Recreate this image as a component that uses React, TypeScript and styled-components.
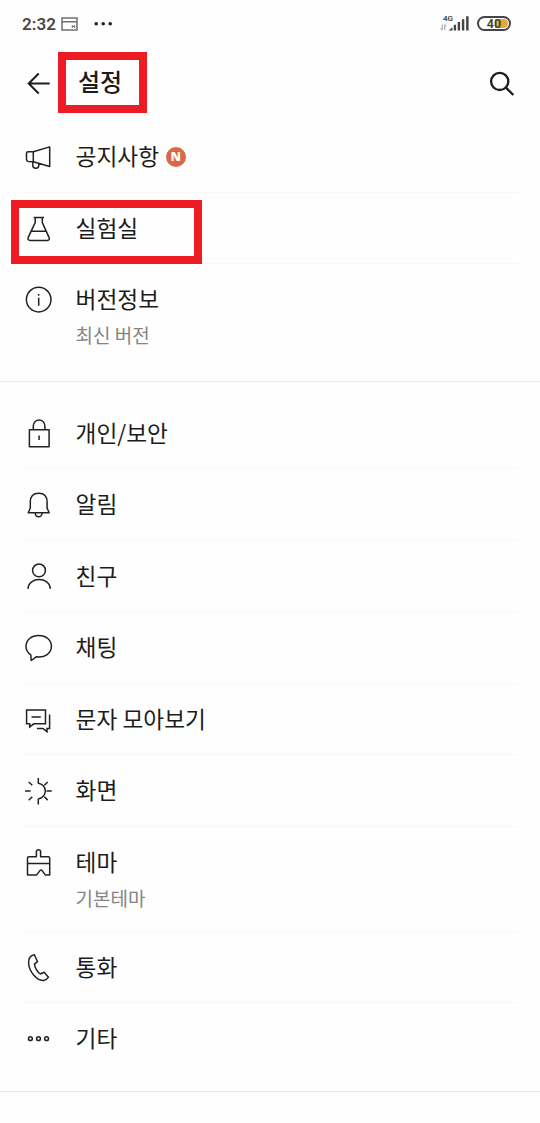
import React from 'react';
import styled, { createGlobalStyle } from 'styled-components';

const GlobalStyle = createGlobalStyle`
  * { box-sizing: border-box; }
  body {
    margin: 0;
    background: #fefefe;
    color: #1c1c1c;
    font-family: "Noto Sans CJK KR", "Noto Sans", sans-serif;
  }
`;

const Screen = styled.div`
  width: 540px;
  height: 1123px;
  overflow: hidden;
  background: #fefefe;
`;

const StatusBar = styled.header`
  height: 46px;
  padding: 1px 29px 0 22px;
  display: flex;
  align-items: center;
  justify-content: space-between;
  font-family: Roboto, sans-serif;
`;

const StatusGroup = styled.div<{ $gap: number }>`
  display: flex;
  align-items: center;
  gap: ${(p) => p.$gap}px;
`;

const Clock = styled.span`
  width: 34px;
  font-size: 17px;
  font-weight: 600;
  line-height: 20px;
  letter-spacing: 0.1px;
  color: #484848;
  white-space: nowrap;
`;

const Signal = styled.div`
  display: flex;
  align-items: flex-end;
  height: 17px;
`;

const Network = styled.div`
  display: flex;
  flex-direction: column;
  width: 13px;
  height: 17px;
`;

const NetworkLabel = styled.span`
  padding-left: 3px;
  font-size: 8px;
  line-height: 8px;
  font-weight: 600;
  color: #444;
`;

const Battery = styled.div`
  width: 34px;
  height: 15px;
  display: flex;
  align-items: center;
  justify-content: center;
  border: 2px solid #444;
  border-radius: 8px;
  font-size: 12.5px;
  line-height: 11px;
  font-weight: 600;
  color: #3c3c3c;
`;

const BatteryLevel = styled.span`
  width: 28px;
  height: 9px;
  display: flex;
  align-items: center;
  justify-content: center;
  border-radius: 0 5px 5px 0;
  background: linear-gradient(to right, transparent 15px, #eba63a 15px);
`;

const TitleBar = styled.div`
  height: 75px;
  padding: 0 24px 0 26px;
  display: flex;
  align-items: center;
`;

const TitleText = styled.h1`
  position: relative;
  flex: 1;
  margin: 0 0 6px 26px;
  font-size: 24px;
  line-height: 36px;
  font-weight: 500;
`;

const Group = styled.section<{ $top: number; $bottom: number }>`
  padding: ${(p) => p.$top}px 0 ${(p) => p.$bottom}px;
  border-bottom: 1px solid #e9e9e9;
`;

const Row = styled.div<{ $tall?: boolean; $last?: boolean }>`
  position: relative;
  height: ${(p) => (p.$tall ? 105 : 71.5)}px;
  margin: 0 22px 0 24px;
  display: flex;
  align-items: flex-start;
  border-bottom: 1px solid ${(p) => (p.$last ? 'transparent' : '#f8f8f8')};
`;

const IconCell = styled.div`
  width: 51.6px;
  height: 71.5px;
  display: flex;
  align-items: center;
`;

const Texts = styled.div`
  display: flex;
  flex-direction: column;
  padding-top: 18px;
`;

const Label = styled.div`
  display: flex;
  align-items: center;
  gap: 6.6px;
  font-size: 22.7px;
  line-height: 34px;
  white-space: nowrap;
`;

const Detail = styled.div`
  padding-top: 5px;
  font-size: 19px;
  line-height: 28px;
  color: #858585;
`;

const NewBadge = styled.span`
  width: 20px;
  height: 20px;
  margin-top: 2px;
  border-radius: 50%;
  background: #dc6747;
  color: #fff;
  font: 800 12.5px/20px "Open Sans", sans-serif;
  text-align: center;
`;

const Highlight = styled.div<{ $x: number; $y: number; $w: number; $h: number }>`
  position: absolute;
  left: ${(p) => p.$x}px;
  top: ${(p) => p.$y}px;
  width: ${(p) => p.$w}px;
  height: ${(p) => p.$h}px;
  border: 8px solid #ed1c24;
`;

const LineIcon = styled.svg`
  flex: none;
  fill: none;
  stroke: #222;
  stroke-width: 1.5;
  stroke-linejoin: round;
`;

const icons: Record<string, React.ReactNode> = {
  notice: (
    <path d="M9.3 9.8 25.7 4.9V24.5L9.3 19.7M9.3 9.8V19.7M9.3 9.8H4.2Q2.5 9.8 2.5 11.5V17.5Q2.5 19.2 4.2 19.5L9.3 19.7M8.8 19.7V23.2A3 3 0 0 0 14.8 23.2V21.4" />
  ),
  lab: (
    <path d="M9.7 4.5H20M11.2 4.5V9.6L4.2 24.4Q3.2 27.4 6.3 27.4H23.2Q26.2 27.2 25 24.4L18.3 9.6V4.5M7.4 18.2H22" />
  ),
  info: (
    <>
      <circle cx="14.7" cy="14.6" r="12.3" />
      <path d="M14.7 12.8V20.8M14.7 8.9V10.7" />
    </>
  ),
  lock: (
    <path d="M5.4 10.7H25.1V27.7H5.4ZM9.3 10.7V6.8A5.8 5.8 0 0 1 20.9 6.8V10.7M15.1 16.4V21" />
  ),
  bell: (
    <path d="M6.3 12C6.3 6 9.5 3.2 14.7 3.2S23.1 6 23.1 12V18.2L25.2 22.7H4.2L6.3 18.2ZM11.3 22.7C11.3 28.1 18.1 28.1 18.1 22.7" />
  ),
  friend: (
    <>
      <circle cx="15" cy="8.4" r="6.4" />
      <path d="M4 26.9C4.6 14.4 25.7 14.4 26.3 26.9" />
    </>
  ),
  chat: (
    <path d="M14.7 2.4C7.3 2.4 2 7 2 13.3C2 17 3.6 19.8 6.8 21.9L7.2 27.5 12.2 23.8C21.2 24.9 27.4 20.2 27.4 13.3C27.4 7 22 2.4 14.7 2.4Z" />
  ),
  messages: (
    <path strokeLinejoin="miter" d="M2.6 4.9H21.5V18.8H9.7L5.7 22V18.8H2.6ZM7.5 11.9H16.8M25.6 9.5V23.5H23V26.7L18.9 23.4H12.9" />
  ),
  display: (
    <path d="M14.3 2V7.2A7.9 7.9 0 0 1 14.3 22.9V28.6M22.5 15H27.7M1 15H6.6M20.4 9.2 23.7 6M20.4 20.8 23.7 24.1M4.7 6 8.3 9.3M4.7 24.3 8.3 20.7" />
  ),
  theme: (
    <path d="M3.5 26.9V10.3Q3.5 8.8 5 8.8H12.4V3.8A2.1 2.1 0 0 1 16.6 3.8V8.8H24.2Q25.7 8.8 25.7 10.3V26.9H21.3L18.1 22.6Q17 21.4 15.9 22.6L12.7 26.9ZM3.5 15.5H25.7" />
  ),
  phone: (
    <path d="M10.4 1.8C6.7 2.5 4.5 5.2 4.6 9.7C4.8 18 12.8 28.4 19.8 27.4C22.3 27 23.4 25.8 24.5 24.2L20.1 19.2 16.3 21C13.4 18.8 11.1 15.1 10.4 11.1L13.5 8.7Z" />
  ),
  more: (
    <>
      <circle cx="6.4" cy="14.7" r="1.9" />
      <circle cx="14.5" cy="14.7" r="1.9" />
      <circle cx="22.6" cy="14.7" r="1.9" />
    </>
  ),
};

interface Item {
  icon: string;
  label: string;
  detail?: string;
  isNew?: boolean;
  marked?: boolean;
}

const aboutItems: Item[] = [
  { icon: 'notice', label: '공지사항', isNew: true },
  { icon: 'lab', label: '실험실', marked: true },
  { icon: 'info', label: '버전정보', detail: '최신 버전' },
];

const settingItems: Item[] = [
  { icon: 'lock', label: '개인/보안' },
  { icon: 'bell', label: '알림' },
  { icon: 'friend', label: '친구' },
  { icon: 'chat', label: '채팅' },
  { icon: 'messages', label: '문자 모아보기' },
  { icon: 'display', label: '화면' },
  { icon: 'theme', label: '테마', detail: '기본테마' },
  { icon: 'phone', label: '통화' },
  { icon: 'more', label: '기타' },
];

function SettingRows({ items }: { items: Item[] }) {
  return (
    <>
      {items.map((item, i) => (
        <Row key={item.label} $tall={!!item.detail} $last={i === items.length - 1}>
          <IconCell>
            <LineIcon width="30" height="30" viewBox="0 0 30 30">
              {icons[item.icon]}
            </LineIcon>
          </IconCell>
          <Texts>
            <Label>
              {item.label}
              {item.isNew && <NewBadge>N</NewBadge>}
            </Label>
            {item.detail && <Detail>{item.detail}</Detail>}
          </Texts>
          {item.marked && <Highlight $x={-13} $y={7.5} $w={191} $h={64} />}
        </Row>
      ))}
    </>
  );
}

export default function App() {
  return (
    <Screen>
      <GlobalStyle />
      <StatusBar>
        <StatusGroup $gap={5}>
          <Clock>2:32</Clock>
          <svg width="17" height="14" viewBox="0 0 17 14" fill="none" stroke="#707070" strokeWidth="1.5">
            <path d="M1 1H16V13H1ZM1 4.7H16" />
            <path d="M11.3 8V11M13.7 8V11M11.3 9.5H13.7" strokeWidth="1" />
          </svg>
          <svg width="32" height="6" viewBox="0 0 32 6" fill="#222">
            <circle cx="13.2" cy="2.7" r="1.8" />
            <circle cx="20.2" cy="2.7" r="1.8" />
            <circle cx="27.2" cy="2.7" r="1.8" />
          </svg>
        </StatusGroup>
        <StatusGroup $gap={7}>
          <Signal>
            <Network>
              <NetworkLabel>4G</NetworkLabel>
              <svg width="8" height="8" viewBox="0 0 8 8" fill="none" stroke="#909090" strokeWidth="0.9">
                <path d="M2.2 1.5V7M0.6 5.2 2.2 7M4.8 7V1.5L6.5 3.2" />
              </svg>
            </Network>
            <svg width="17" height="17" viewBox="0 0 17 17" fill="#444" overflow="visible">
              <path d="M-4.5 15.5 -0.5 12.3V15.5ZM0.8 9.8H3.1V15.5H0.8ZM4.7 7H7.1V15.5H4.7ZM8.9 4.3H11.3V15.5H8.9ZM13.1 1.2H15.6V15.5H13.1Z" />
            </svg>
          </Signal>
          <Battery>
            <BatteryLevel>40</BatteryLevel>
          </Battery>
        </StatusGroup>
      </StatusBar>
      <TitleBar>
        <svg width="26" height="26" viewBox="0 0 26 26" fill="none" stroke="#1c1c1c" strokeWidth="2">
          <path d="M23.7 12.5H3M12.7 2.5 2.7 12.5 12.7 22.5" />
        </svg>
        <TitleText>
          설정
          <Highlight $x={-20} $y={-10.5} $w={89} $h={61} />
        </TitleText>
        <svg width="28" height="28" viewBox="0 0 28 28" fill="none" stroke="#1c1c1c" strokeWidth="2.3">
          <circle cx="11.7" cy="11.4" r="8.6" />
          <path d="M17.9 17.6 25.3 25" />
        </svg>
      </TitleBar>
      <Group $top={0} $bottom={11.6}>
        <SettingRows items={aboutItems} />
      </Group>
      <Group $top={16.2} $bottom={16.4}>
        <SettingRows items={settingItems} />
      </Group>
    </Screen>
  );
}
